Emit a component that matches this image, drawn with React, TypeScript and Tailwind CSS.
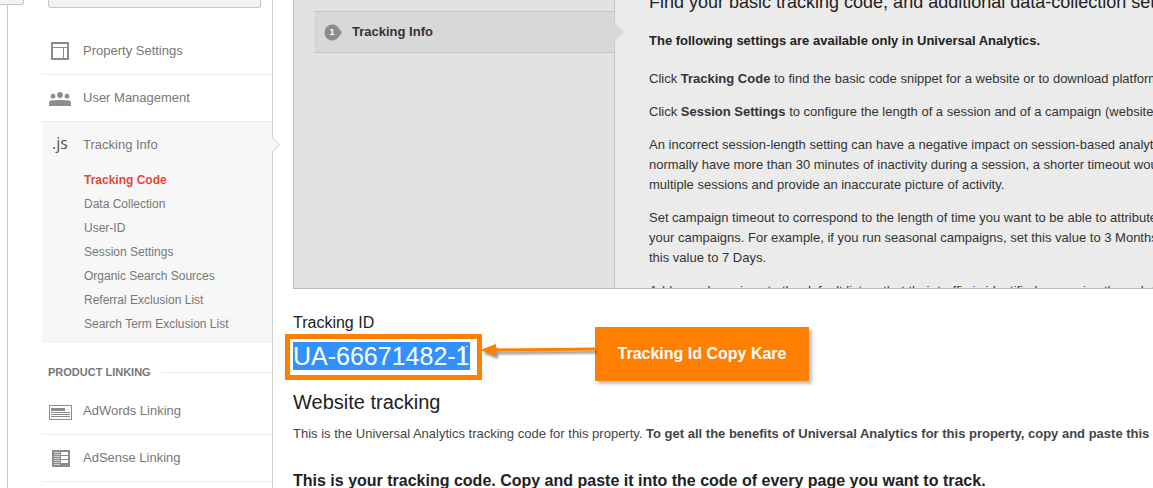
import type { ReactNode } from 'react'

const trackingLinks = [
  'Tracking Code',
  'Data Collection',
  'User-ID',
  'Session Settings',
  'Organic Search Sources',
  'Referral Exclusion List',
  'Search Term Exclusion List',
]

function SettingsIcon() {
  return (
    <svg width="18" height="18" viewBox="0 0 18 18" fill="none" stroke="#8c8c8c" shapeRendering="crispEdges">
      <rect x="1" y="1" width="16" height="16" strokeWidth="2" />
      <path d="M2 5.5h14M12.5 6v10" />
    </svg>
  )
}

function UsersIcon() {
  return (
    <svg width="22" height="16" viewBox="0 -2 22 16" fill="#8c8c8c">
      <circle cx="4" cy="4.2" r="2.4" />
      <circle cx="11" cy="3" r="2.9" />
      <circle cx="18" cy="4.2" r="2.4" />
      <path d="M0 14v-3.500q0-2 3.500-2.300l3 .1Q11 7.200 15.500 8.300l3-.1q3.500.3 3.500 2.300V14z" />
    </svg>
  )
}

function AdWordsIcon() {
  return (
    <svg width="23" height="17" viewBox="0 -2 23 17" fill="#8c8c8c" shapeRendering="crispEdges">
      <path d="M0 0h23v15H0zM1 1v13h21V1z" fillRule="evenodd" />
      <path d="M2 3h14v3H2zM2 7h19v1H2zM2 9h19v1H2zM2 11h19v1H2z" />
    </svg>
  )
}

function AdSenseIcon() {
  return (
    <svg width="20" height="17" viewBox="-2 0 20 17" shapeRendering="crispEdges">
      <path fill="#8c8c8c" d="M0 0h18v17H0z" />
      <path fill="#d0d0d0" d="M2 2h6v1H2zM2 4h6v1H2zM2 6h6v1H2zM2 8h6v1H2zM2 10h6v1H2zM2 12h6v1H2zM2 14h6v1H2z" />
      <path fill="#fff" d="M9 2h7v3H9zM9 6h7v3H9zM9 10h7v3H9z" />
    </svg>
  )
}

function NavItem({ icon, label }: { icon: ReactNode; label: string }) {
  return (
    <a href="#" className="flex h-[46px] items-center text-[13px] text-[#777]">
      <span className="mr-[5px] flex w-9 justify-center">{icon}</span>
      {label}
    </a>
  )
}

function Sidebar() {
  return (
    <nav className="relative w-[265px] shrink-0 border-r border-[#d2d2d2] pl-[34px]">
      <button
        aria-label="Select property"
        className="mr-[11px] ml-1.5 block h-2 w-[213px] rounded-b-[3px] border border-t-0 border-[#c6c6c6] bg-[#f3f3f3]"
      />
      <div className="mt-5 border-b border-[#ebebeb]">
        <NavItem icon={<SettingsIcon />} label="Property Settings" />
      </div>
      <div className="border-b border-[#ebebeb]">
        <NavItem icon={<UsersIcon />} label="User Management" />
      </div>
      <div className="relative border-b border-[#ebebeb] bg-[#f7f7f7] pb-[5px]">
        <NavItem
          icon={<span className="pb-1 font-['Open_Sans',sans-serif] text-[16px] font-medium text-[#555]">.js</span>}
          label="Tracking Info"
        />
        <ul>
          {trackingLinks.map((label, i) => (
            <li key={label} className="h-6 pl-[42px] text-[12px] leading-6">
              <a href="#" className={i === 0 ? 'font-bold text-[#dd4b39]' : 'text-[#777]'}>
                {label}
              </a>
            </li>
          ))}
        </ul>
        <svg className="absolute top-[15px] -right-2" width="8" height="16" viewBox="0 0 8 16">
          <path d="M0 0l7.500 8L0 16" fill="#f7f7f7" stroke="#d2d2d2" />
        </svg>
      </div>
      <div className="flex h-[46px] items-center pt-3.5 pl-1.5">
        <h2 className="mr-2.5 text-[11px] font-bold text-[#777]">PRODUCT LINKING</h2>
        <div className="h-px flex-1 bg-[#ebebeb]" />
      </div>
      <div className="border-b border-[#ebebeb]">
        <NavItem icon={<AdWordsIcon />} label="AdWords Linking" />
      </div>
      <div className="border-b border-[#ebebeb]">
        <NavItem icon={<AdSenseIcon />} label="AdSense Linking" />
      </div>
    </nav>
  )
}

function HelpPanel() {
  return (
    <section className="flex h-[289px] overflow-hidden border-b border-l border-[#bdbdbd] bg-[#e2e2e2]">
      <div className="w-[321px] shrink-0 border-r border-[#c6c6c6] pt-[11px] pl-5">
        <a
          href="#"
          className="relative flex h-[42px] items-center border-y border-[#c4c4c4] bg-[#d8d8d8] pl-2.5 text-[13px] font-bold text-[#333]"
        >
          <svg className="mr-2.5" width="18" height="18" viewBox="0 0 18 18">
            <path d="M8.500 1.500c4 0 5 2 9.500 8-4.500 6-5.500 8-9.500 8a8 8 0 0 1 0-16z" fill="#8c8c8c" />
            <text x="8" y="12" textAnchor="middle" fontSize="9" fontWeight="bold" fill="#fff">
              1
            </text>
          </svg>
          Tracking Info
          <svg className="absolute top-[10px] -right-2.5" width="10" height="20" viewBox="0 0 10 20">
            <path d="M0 0l10 10L0 20z" fill="#d8d8d8" />
          </svg>
        </a>
      </div>
      <div className="flex-1 overflow-hidden bg-[#ebebeb] pl-[34px] text-[13px] leading-5 whitespace-nowrap text-[#333]">
        <h2 className="-mt-2.5 text-[18px] leading-6 text-[#222]">
          Find your basic tracking code, and additional data-collection settings.
        </h2>
        <p className="mt-[17px] font-bold text-[#222]">
          The following settings are available only in Universal Analytics.
        </p>
        <p className="mt-[18px]">
          Click <b>Tracking Code</b> to find the basic code snippet for a website or to download platform-specific SDKs.
        </p>
        <p className="mt-[13px]">
          Click <b>Session Settings</b> to configure the length of a session and of a campaign (website only).
        </p>
        <p className="mt-[13px]">
          An incorrect session-length setting can have a negative impact on session-based analytics. If users
          <br />
          normally have more than 30 minutes of inactivity during a session, a shorter timeout would create
          <br />
          multiple sessions and provide an inaccurate picture of activity.
        </p>
        <p className="mt-[13px]">
          Set campaign timeout to correspond to the length of time you want to be able to attribute visits to
          <br />
          your campaigns. For example, if you run seasonal campaigns, set this value to 3 Months or set
          <br />
          this value to 7 Days.
        </p>
        <p className="mt-[13px]">
          Add search engines to the default list so that their traffic is identified as coming through the search engine.
        </p>
      </div>
    </section>
  )
}

function Callout() {
  return (
    <div className="absolute top-[-15px] left-[189px] flex">
      <svg className="mt-1.5 drop-shadow-[2px_3px_1px_rgba(0,0,0,0.4)]" width="113" height="32" viewBox="0 0 113 32">
        <path d="M12 17L113 16" stroke="#ff8000" strokeWidth="3" />
        <path d="M-2 17L14 11V23z" fill="#ff8000" />
      </svg>
      <div className="flex h-[54px] w-[214px] items-center justify-center bg-[#ff8000] text-[16px] font-bold whitespace-nowrap text-white shadow-[3px_3px_3px_rgba(0,0,0,0.25)]">
        Tracking Id Copy Kare
      </div>
    </div>
  )
}

export default function App() {
  return (
    <div className="flex min-h-screen overflow-hidden bg-white font-['Liberation_Sans',Arial,sans-serif]">
      {/* Edge of the account column */}
      <div className="relative w-2 shrink-0 border-r border-[#c6c6c6]">
        <div className="absolute top-0 left-0 h-[5px] w-6 rounded-br-[3px] border-r border-b border-[#c6c6c6] bg-[#f3f3f3]" />
      </div>
      <Sidebar />
      <main className="min-w-0 flex-1 pl-5 whitespace-nowrap text-[#222]">
        <HelpPanel />
        <h3 className="mt-6 text-[16px] leading-5">Tracking ID</h3>
        <div className="relative mt-[9px] h-7 w-[177px]">
          <span className="block bg-[#3390ff] text-[25px] leading-7 text-white">UA-66671482-1</span>
          <div className="absolute -top-2 -left-2 h-[46px] w-[197px] border-5 border-[#ff8000]" />
          <svg className="absolute top-1 left-[168px]" width="7" height="18" viewBox="0 0 7 18" fill="none" stroke="#cfe0f5">
            <path d="M0 .5h2.500l1 1 1-1H7M3.500 1.500v15M0 17.500h2.500l1-1 1 1H7" />
          </svg>
          <Callout />
        </div>
        <h2 className="mt-5 text-[20px] leading-6">Website tracking</h2>
        <p className="mt-2.5 text-[13px] leading-5 text-[#444]">
          This is the Universal Analytics tracking code for this property.{' '}
          <b>To get all the benefits of Universal Analytics for this property, copy and paste this code.</b>
        </p>
        <p className="mt-[27px] text-[16px] leading-5 font-bold">
          This is your tracking code. Copy and paste it into the code of every page you want to track.
        </p>
      </main>
    </div>
  )
}
